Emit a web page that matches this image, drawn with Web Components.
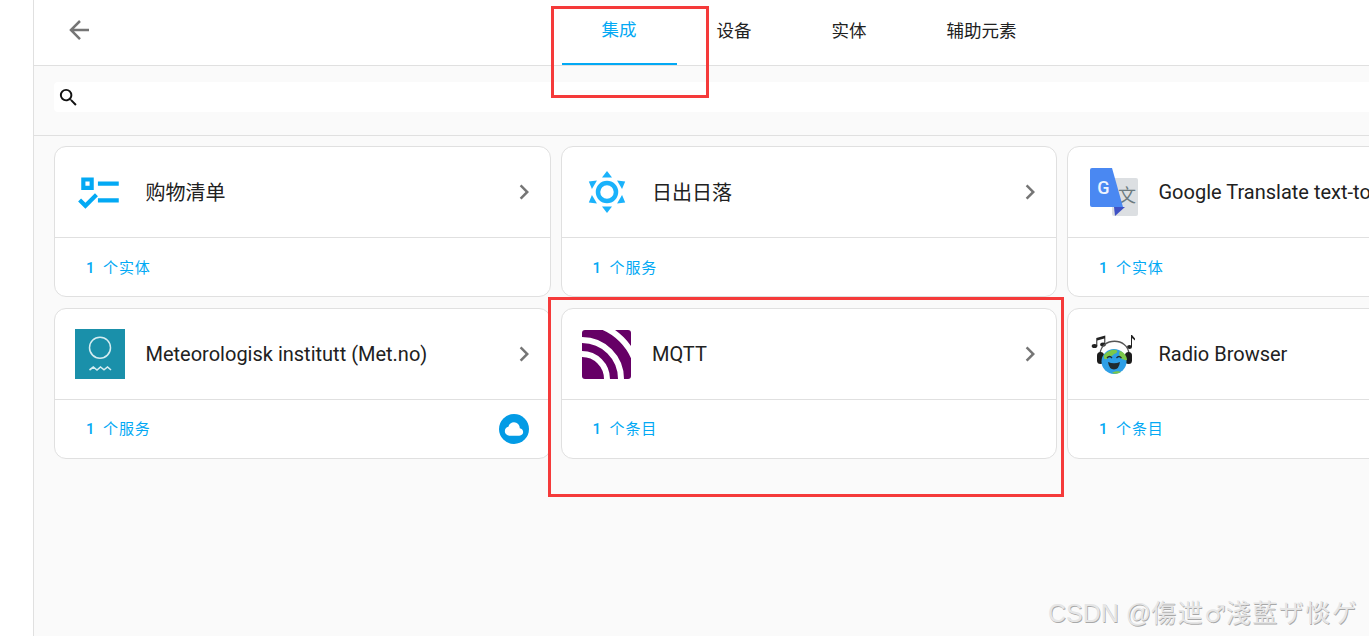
<!DOCTYPE html>
<html lang="zh">
<head>
<meta charset="utf-8">
<title>集成</title>
<style>
  html, body { margin: 0; height: 100%; overflow: hidden; background: #fff; }
  body { font-family: Roboto, "Noto Sans CJK SC", sans-serif; }
</style>
</head>
<body>
<config-page>
  <tab-bar slot="top">
    <tab-item active>集成</tab-item>
    <tab-item>设备</tab-item>
    <tab-item>实体</tab-item>
    <tab-item>辅助元素</tab-item>
  </tab-bar>
  <search-box slot="top"></search-box>

  <integration-card cjk name="购物清单" num="1" count="个实体">
    <svg slot="icon" viewBox="0 0 24 24" width="50" height="50" fill="#03a9f4"><path d="M3,5H9V11H3V5M5,7V9H7V7H5M11,7H21V9H11V7M11,15H21V17H11V15M5,20L1.5,16.5L2.91,15.09L5,17.17L9.59,12.59L11,14L5,20Z"/></svg>
  </integration-card>

  <integration-card cjk name="日出日落" num="1" count="个服务">
    <svg slot="icon" viewBox="0 0 50 50" width="50" height="50">
      <circle cx="25" cy="25" r="9" fill="none" stroke="#1ab2fb" stroke-width="4.500"/>
      <g fill="#1ab2fb">
        <path d="M25 4l5 6.500h-10z"/>
        <path d="M25 4l5 6.500h-10z" transform="rotate(60 25 25)"/>
        <path d="M25 4l5 6.500h-10z" transform="rotate(120 25 25)"/>
        <path d="M25 4l5 6.500h-10z" transform="rotate(180 25 25)"/>
        <path d="M25 4l5 6.500h-10z" transform="rotate(240 25 25)"/>
        <path d="M25 4l5 6.500h-10z" transform="rotate(300 25 25)"/>
      </g>
    </svg>
  </integration-card>

  <integration-card name="Google Translate text-to-speech" num="1" count="个实体">
    <svg slot="icon" viewBox="0 0 50 50" width="50" height="50">
      <rect x="24" y="11" width="26" height="38" rx="2" fill="#dcdfe2"/>
      <text x="39" y="35" font-size="18" font-family="Noto Sans CJK SC, sans-serif" fill="#6d7b80" text-anchor="middle">文</text>
      <path d="M26 40h11l-10 9z" fill="#3f51c4"/>
      <path d="M4 1h20l11 39H4a2 2 0 0 1-2-2V3a2 2 0 0 1 2-2z" fill="#4a88f2"/>
      <text x="15.500" y="27" font-size="18" font-weight="500" font-family="Roboto, sans-serif" fill="#eef3fe" text-anchor="middle">G</text>
    </svg>
  </integration-card>

  <integration-card name="Meteorologisk institutt (Met.no)" num="1" count="个服务" cloud>
    <svg slot="icon" viewBox="0 0 50 50" width="50" height="50">
      <rect width="50" height="50" fill="#1a90aa"/>
      <circle cx="25" cy="18.700" r="10.500" fill="none" stroke="#d4ecf1" stroke-width="1.500"/>
      <path d="M14.500 41l3.800-3 3.700 3 3.500-3 3.500 2.800 3.500-2.800 3.500 3" fill="none" stroke="#d4ecf1" stroke-width="1.600"/>
    </svg>
  </integration-card>

  <integration-card name="MQTT" num="1" count="个条目">
    <svg slot="icon" viewBox="0 0 50 50" width="50" height="50">
      <defs><clipPath id="mq"><rect x="0" y="1" width="49" height="49" rx="3"/></clipPath></defs>
      <g clip-path="url(#mq)">
        <rect x="0" y="1" width="49" height="49" fill="#660066"/>
        <g fill="none" stroke="#fff" transform="translate(0 50)">
          <circle r="25" stroke-width="6"/>
          <circle r="39" stroke-width="6"/>
          <circle r="56" stroke-width="6"/>
        </g>
      </g>
    </svg>
  </integration-card>

  <integration-card name="Radio Browser" num="1" count="个条目">
    <svg slot="icon" viewBox="0 0 50 50" width="50" height="50">
      <g fill="#222">
        <ellipse cx="6.500" cy="17" rx="2.800" ry="2"/>
        <ellipse cx="15" cy="15.500" rx="2.800" ry="2"/>
        <path d="M8.300 17V9l9-2.500v9h-1V9.500l-7 2V17z"/>
        <ellipse cx="41.500" cy="18" rx="2.500" ry="2"/>
        <path d="M43 18h1V9l3 2.500V9.500L44 6h-1z"/>
      </g>
      <path d="M12 25C13 8 40 8 41 25" fill="none" stroke="#555" stroke-width="1.300"/>
      <rect x="9" y="23" width="7" height="12" rx="3.500" fill="#1c1c1c"/>
      <rect x="37" y="23" width="7" height="12" rx="3.500" fill="#1c1c1c"/>
      <circle cx="26" cy="32.500" r="12.500" fill="#2e9fe6"/>
      <path d="M16 26c3-4 9-6 12-5 3 1 0 4-2 4-2 3-5 2-6 4-2 2-5 2-4-3zM32 22c4 1 7 5 7 9-2 1-3-1-5-1-2-1-4-6-2-8zM24 44c2-2 7-2 9-1-3 2-6 2-9 1z" fill="#7cc84a"/>
      <path d="M19 29q2.500-3 5 0M28.500 29q2.500-3 5 0" fill="none" stroke="#1f2a30" stroke-width="1.300"/>
      <path d="M20 33q6 2.500 12 0q-1 7.500-6 7.500t-6-7.500z" fill="#1f2a30"/>
    </svg>
  </integration-card>
</config-page>

<red-mark style="left:551px;top:6px;width:158px;height:92px"></red-mark>
<red-mark style="left:548px;top:297px;width:516px;height:200px"></red-mark>
<water-mark>CSDN @<span style="letter-spacing:1.5px;font-size:25px">傷迣</span><span style="font-family:'DejaVu Sans';font-size:24px">♂</span><span style="letter-spacing:1.500px;font-size:25px">淺藍ザ惔ゲ</span></water-mark>

<script>
const pageTemplate = document.createElement('template');
pageTemplate.innerHTML = `
  <style>
    :host {
      display: flex;
      width: 1369px;
      height: 636px;
      overflow: hidden;
      background: #fafafa;
      color: #212121;
    }
    #rail {
      flex: 0 0 33px;
      background: #fff;
      border-right: 1px solid #e0e0e0;
    }
    #main {
      flex: 1;
      min-width: 0;
      display: flex;
      flex-direction: column;
    }
    #grid {
      display: grid;
      grid-template-columns: repeat(3, 496.5px);
      grid-auto-rows: 151px;
      column-gap: 10px;
      row-gap: 10.5px;
      padding: 10px 0 0 20px;
    }
  </style>
  <div id="rail"></div>
  <div id="main">
    <slot name="top"></slot>
    <div id="grid"><slot></slot></div>
  </div>
`;

class ConfigPage extends HTMLElement {
  constructor() {
    super();
    this.attachShadow({ mode: 'open' });
    this.shadowRoot.appendChild(pageTemplate.content.cloneNode(true));
  }
}

const tabBarTemplate = document.createElement('template');
tabBarTemplate.innerHTML = `
  <style>
    :host {
      display: flex;
      height: 65px;
      background: #fff;
      border-bottom: 1px solid #e0e0e0;
    }
    #back {
      flex: none;
      display: block;
      margin: 15px 468px 0 30px;
      width: 30px;
      height: 30px;
      fill: #757575;
    }
    nav { display: flex; height: 65px; }
  </style>
  <svg id="back" viewBox="0 0 24 24"><path d="M20,11V13H8L13.5,18.500L12.080,19.920L4.160,12L12.080,4.080L13.500,5.500L8,11H20Z"/></svg>
  <nav><slot></slot></nav>
`;

class TabBar extends HTMLElement {
  constructor() {
    super();
    this.attachShadow({ mode: 'open' });
    this.shadowRoot.appendChild(tabBarTemplate.content.cloneNode(true));
  }
}

const tabItemTemplate = document.createElement('template');
tabItemTemplate.innerHTML = `
  <style>
    :host {
      display: block;
      box-sizing: border-box;
      height: 65px;
      padding: 18px 40.5px 0 39.5px;
      font-size: 17.5px;
      line-height: 26px;
      color: #212121;
      white-space: nowrap;
    }
    :host([active]) {
      padding-top: 17px;
      color: #03a9f4;
      border-bottom: 2px solid #03a9f4;
    }
  </style>
  <slot></slot>
`;

class TabItem extends HTMLElement {
  constructor() {
    super();
    this.attachShadow({ mode: 'open' });
    this.shadowRoot.appendChild(tabItemTemplate.content.cloneNode(true));
  }
}

const searchTemplate = document.createElement('template');
searchTemplate.innerHTML = `
  <style>
    :host {
      display: block;
      padding: 16px 0 23px 20px;
      border-bottom: 1px solid #e0e0e0;
    }
    #box {
      display: flex;
      align-items: center;
      height: 30px;
      padding-left: 3px;
      background: #fff;
      border-radius: 4px 0 0 4px;
    }
    svg { width: 23px; height: 23px; fill: #111; }
  </style>
  <div id="box">
    <svg viewBox="0 0 24 24"><path d="M9.500,3A6.500,6.500 0 0,1 16,9.500C16,11.110 15.410,12.590 14.440,13.730L14.710,14H15.500L20.500,19L19,20.500L14,15.500V14.710L13.730,14.440C12.590,15.410 11.110,16 9.500,16A6.500,6.500 0 0,1 3,9.500A6.500,6.500 0 0,1 9.500,3M9.500,5C7,5 5,7 5,9.500C5,12 7,14 9.500,14C12,14 14,12 14,9.500C14,7 12,5 9.500,5Z"/></svg>
  </div>
`;

class SearchBox extends HTMLElement {
  constructor() {
    super();
    this.attachShadow({ mode: 'open' });
    this.shadowRoot.appendChild(searchTemplate.content.cloneNode(true));
  }
}

const cardTemplate = document.createElement('template');
cardTemplate.innerHTML = `
  <style>
    :host {
      display: flex;
      flex-direction: column;
      box-sizing: border-box;
      background: #fff;
      border: 1px solid #e0e0e0;
      border-radius: 12px;
      min-width: 0;
    }
    #head {
      flex: 0 0 90px;
      display: flex;
      align-items: center;
      padding: 0 11px 0 20px;
      border-bottom: 1px solid #e0e0e0;
    }
    ::slotted(svg) { flex: none; display: block; }
    #name {
      flex: 1;
      margin-left: 20.5px;
      font-size: 20px;
      white-space: nowrap;
      overflow: hidden;
    }
    :host([cjk]) #name { padding-bottom: 2px; }
    #more { flex: none; width: 30px; height: 30px; fill: #757575; }
    #foot {
      flex: 1;
      display: flex;
      align-items: center;
      justify-content: space-between;
      padding: 0 21px 0 31px;
      font-size: 15px;
      letter-spacing: 0.06em;
      color: #03a9f4;
    }
    #count { padding-bottom: 2px; }
    #num { font-weight: 500; margin-right: 3px; }
    #cloud {
      width: 30px;
      height: 30px;
      border-radius: 50%;
      background: #039be5;
      display: none;
      align-items: center;
      justify-content: center;
    }
    :host([cloud]) #cloud { display: flex; }
    #cloud svg { width: 20px; height: 20px; fill: #fff; }
  </style>
  <div id="head">
    <slot name="icon"></slot>
    <div id="name"></div>
    <svg id="more" viewBox="0 0 24 24"><path d="M8.590,16.580L13.170,12L8.590,7.410L10,6L16,12L10,18L8.590,16.580Z"/></svg>
  </div>
  <div id="foot">
    <span id="count"><span id="num"></span> <span id="unit"></span></span>
    <span id="cloud"><svg viewBox="0 0 24 24"><path d="M6.500 20Q4.220 20 2.610 18.430 1 16.850 1 14.580 1 12.630 2.170 11.100 3.350 9.570 5.250 9.150 5.880 6.850 7.750 5.430 9.630 4 12 4 14.930 4 16.960 6.040 19 8.070 19 11 20.730 11.200 21.860 12.500 23 13.780 23 15.500 23 17.380 21.690 18.690 20.380 20 18.500 20Z"/></svg></span>
  </div>
`;

class IntegrationCard extends HTMLElement {
  constructor() {
    super();
    this.attachShadow({ mode: 'open' });
    this.shadowRoot.appendChild(cardTemplate.content.cloneNode(true));
  }

  connectedCallback() {
    this.shadowRoot.querySelector('#name').textContent = this.getAttribute('name');
    this.shadowRoot.querySelector('#num').textContent = this.getAttribute('num');
    this.shadowRoot.querySelector('#unit').textContent = this.getAttribute('count');
  }
}

const markTemplate = document.createElement('template');
markTemplate.innerHTML = `
  <style>
    :host {
      display: block;
      position: absolute;
      box-sizing: border-box;
      border: 3px solid #f53a3a;
    }
  </style>
`;

class RedMark extends HTMLElement {
  constructor() {
    super();
    this.attachShadow({ mode: 'open' });
    this.shadowRoot.appendChild(markTemplate.content.cloneNode(true));
  }
}

const waterTemplate = document.createElement('template');
waterTemplate.innerHTML = `
  <style>
    :host {
      display: block;
      position: absolute;
      left: 1048px;
      top: 596px;
      font-family: "Liberation Sans", "Noto Sans CJK TC", sans-serif;
      font-size: 25px;
      line-height: 34px;
      white-space: nowrap;
      color: #e6e6e6;
      text-shadow: 0.7px 0.7px 0.6px #a8a8a8;
    }
  </style>
  <slot></slot>
`;

class WaterMark extends HTMLElement {
  constructor() {
    super();
    this.attachShadow({ mode: 'open' });
    this.shadowRoot.appendChild(waterTemplate.content.cloneNode(true));
  }
}

customElements.define('config-page', ConfigPage);
customElements.define('tab-bar', TabBar);
customElements.define('tab-item', TabItem);
customElements.define('search-box', SearchBox);
customElements.define('integration-card', IntegrationCard);
customElements.define('red-mark', RedMark);
customElements.define('water-mark', WaterMark);
</script>
</body>
</html>
